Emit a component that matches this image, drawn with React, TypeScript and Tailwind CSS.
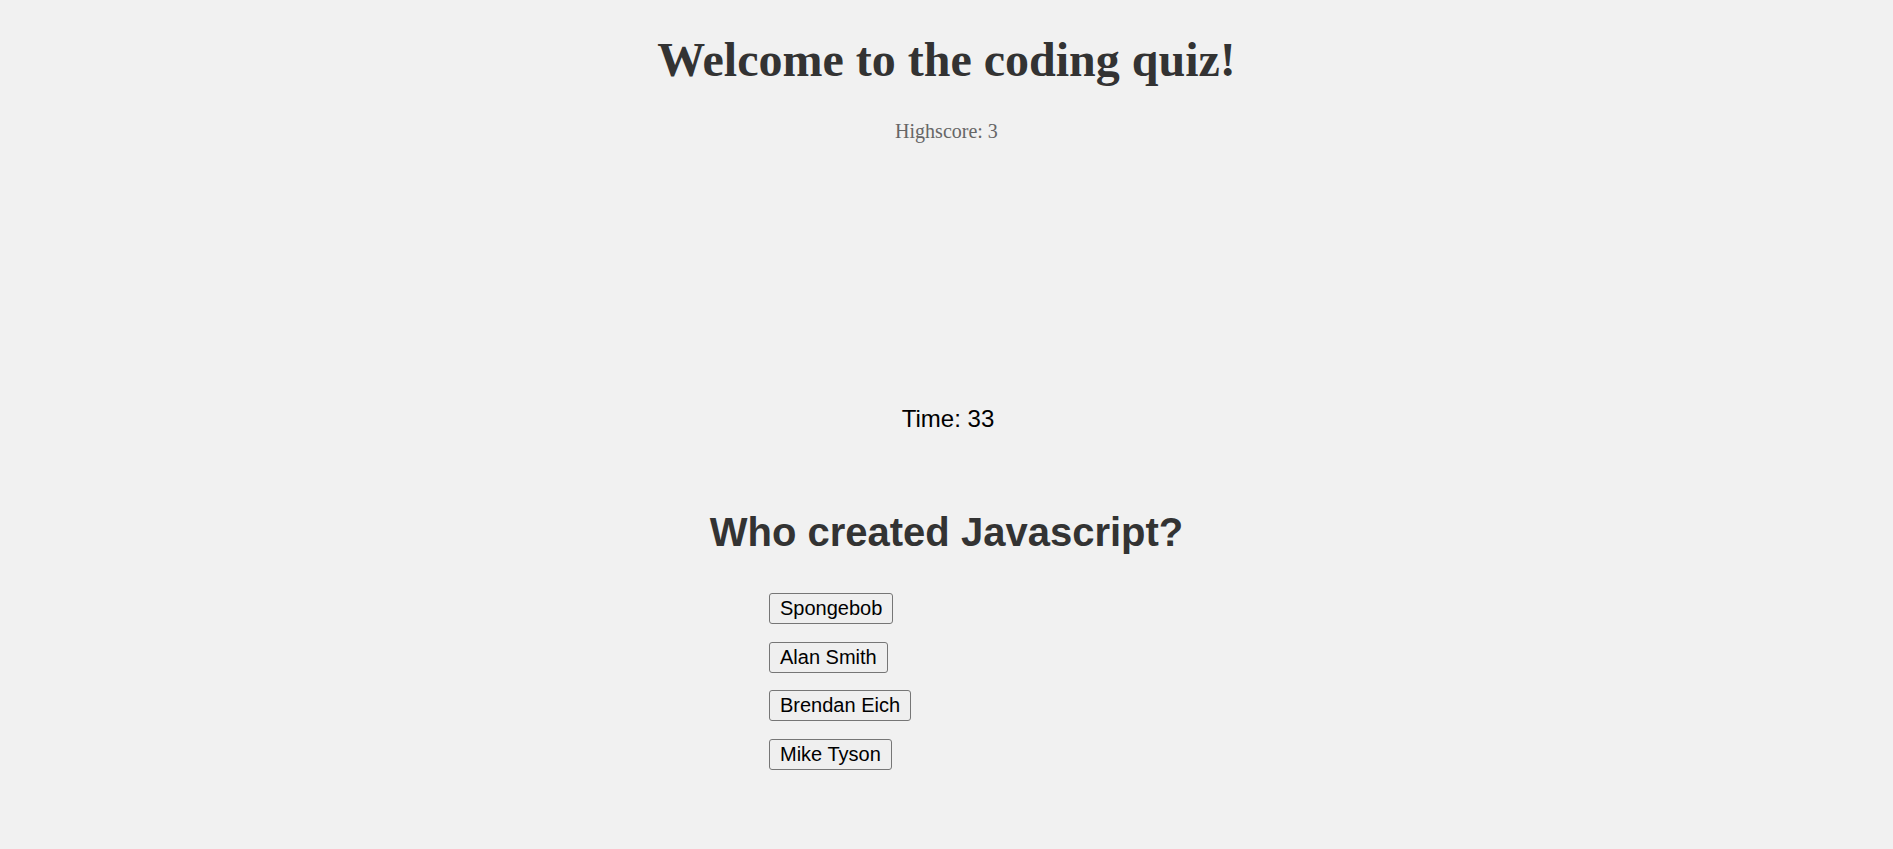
import React from "react";

export default function App() {
  const answers = ["Spongebob", "Alan Smith", "Brendan Eich", "Mike Tyson"];
  return (
    <div className="min-h-screen w-full bg-[#f1f1f1] flex flex-col items-center">
      <h1 className="mt-[32px] text-[48px] leading-[55px] font-bold text-[#333333] font-['Liberation_Serif','Times_New_Roman',serif]">
        Welcome to the coding quiz!
      </h1>
      <p className="mt-[33px] text-[20px] leading-[23px] text-[#666666] font-['Liberation_Serif','Times_New_Roman',serif]">
        Highscore: 3
      </p>
      <div className="mt-[262px] pl-[3px] text-[24px] leading-[28px] text-black font-['Liberation_Sans',Arial,sans-serif]">
        Time: 33
      </div>
      <h2 className="mt-[76px] text-[40px] leading-[46px] font-bold text-[#333333] font-['Liberation_Sans',Arial,sans-serif]">
        Who created Javascript?
      </h2>
      <div className="mt-[38px] w-[355px] flex flex-col items-start gap-[17.6px]">
        {answers.map((a) => (
          <button
            key={a}
            className="px-[10px] py-[3px] text-[20px] leading-[23px] text-black bg-[#efefef] border border-[#767676] rounded-[3px] font-['Liberation_Sans',Arial,sans-serif]"
          >
            {a}
          </button>
        ))}
      </div>
    </div>
  );
}
